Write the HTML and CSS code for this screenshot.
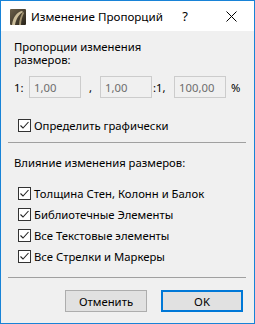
FILE: index.html
```html
<!DOCTYPE html>
<html lang="ru">
<head>
    <meta charset="UTF-8">
    <title>Изменение Пропорций</title>
    <link rel="stylesheet" href="styles.css">
</head>
<body>
<div class="window">
    <div class="titlebar">
        <svg class="app-icon" width="16" height="16" viewBox="0 0 16 16">
            <defs>
                <linearGradient id="ig" x1="0" y1="0" x2="1" y2="1">
                    <stop offset="0" stop-color="#6b604a"/>
                    <stop offset="1" stop-color="#2a241a"/>
                </linearGradient>
            </defs>
            <rect width="16" height="16" rx="1" fill="url(#ig)"/>
            <path d="M2 16 C3 8 7 3 12 2 L13 3 C9 5 6 10 5 16 Z" fill="#cbbd9a"/>
            <path d="M9 16 C9 11 11 6 13 3 L14 4 C12 8 11 12 11 16 Z" fill="#a39472"/>
        </svg>
        <span class="title">Изменение Пропорций</span>
        <span class="caption-btn help">?</span>
        <span class="caption-btn">
            <svg width="11" height="11" viewBox="0 0 11 11">
                <path d="M0.5 0.5 L10.5 10.5 M10.5 0.5 L0.5 10.5" stroke="#000" stroke-width="1"/>
            </svg>
        </span>
    </div>

    <div class="content">
        <div class="label two-lines">
            <div>Пропорции изменения</div>
            <div>размеров:</div>
        </div>

        <div class="ratio-row">
            <span class="sep-text first">1:</span>
            <input class="field" type="text" value="1,00" disabled>
            <span class="sep-text comma">,</span>
            <input class="field" type="text" value="1,00" disabled>
            <span class="sep-text colon">:1,</span>
            <input class="field" type="text" value="100,00" disabled>
            <span class="sep-text pct">%</span>
        </div>

        <div class="check-row graphic">
            <span class="box"><svg width="11" height="11" viewBox="0 0 11 11"><polyline points="1.5,5.5 4,8 9.5,2" fill="none" stroke="#222" stroke-width="1.1"/></svg></span>
            <span>Определить графически</span>
        </div>

        <div class="divider first-divider"></div>

        <div class="label single">Влияние изменения размеров:</div>

        <div class="check-list">
            <div class="check-row">
                <span class="box"><svg width="11" height="11" viewBox="0 0 11 11"><polyline points="1.5,5.5 4,8 9.5,2" fill="none" stroke="#222" stroke-width="1.1"/></svg></span>
                <span>Толщина Стен, Колонн и Балок</span>
            </div>
            <div class="check-row">
                <span class="box"><svg width="11" height="11" viewBox="0 0 11 11"><polyline points="1.5,5.5 4,8 9.5,2" fill="none" stroke="#222" stroke-width="1.1"/></svg></span>
                <span>Библиотечные Элементы</span>
            </div>
            <div class="check-row">
                <span class="box"><svg width="11" height="11" viewBox="0 0 11 11"><polyline points="1.5,5.5 4,8 9.5,2" fill="none" stroke="#222" stroke-width="1.1"/></svg></span>
                <span>Все Текстовые элементы</span>
            </div>
            <div class="check-row">
                <span class="box"><svg width="11" height="11" viewBox="0 0 11 11"><polyline points="1.5,5.5 4,8 9.5,2" fill="none" stroke="#222" stroke-width="1.1"/></svg></span>
                <span>Все Стрелки и Маркеры</span>
            </div>
        </div>

        <div class="divider bottom-divider"></div>

        <div class="buttons">
            <button class="btn">Отменить</button>
            <button class="btn default">OK</button>
        </div>
    </div>
</div>
</body>
</html>
```

FILE: styles.css
```css
* {
    box-sizing: border-box;
}

body {
    margin: 0;
    font-family: "Noto Sans", "Open Sans", sans-serif;
    font-size: 11.3px;
    color: #000;
    background: #f0f0f0;
}

.window {
    width: 255px;
    height: 324px;
    border: 1px solid #1883d7;
    background: #f0f0f0;
    overflow: hidden;
}

.titlebar {
    height: 30px;
    background: #fff;
    display: flex;
    align-items: center;
    padding-left: 9px;
}

.app-icon {
    flex: none;
    margin-top: 1px;
}

.title {
    flex: 1;
    min-width: 0;
    margin-left: 5px;
    font-size: 11.6px;
    white-space: nowrap;
    color: #000;
}

.caption-btn {
    flex: none;
    width: 46px;
    height: 30px;
    display: flex;
    align-items: center;
    justify-content: center;
}

.caption-btn svg {
    display: block;
}

.help {
    font-size: 13px;
}

.content {
    padding: 9px 7px 0 13px;
}

.two-lines {
    height: 26px;
    line-height: 13px;
}

.two-lines div {
    height: 13px;
}

.single {
    margin-top: 10px;
    height: 20px;
    line-height: 20px;
}

.ratio-row {
    display: flex;
    align-items: center;
    margin-top: 10px;
    height: 22px;
}

.field {
    width: 52px;
    height: 22px;
    border: 1px solid #cccccc;
    background: #f0f0f0;
    color: #6d6d6d;
    font-family: inherit;
    font-size: 11.3px;
    padding: 0 0 0 4px;
    margin: 0;
}

.sep-text.first {
    width: 15px;
}

.sep-text.comma {
    width: 19px;
    padding-left: 8px;
}

.sep-text.colon {
    width: 22px;
    padding-left: 1px;
}

.sep-text.pct {
    padding-left: 5px;
}

.check-list {
    margin-top: 10px;
}

.check-row {
    display: flex;
    align-items: center;
    height: 21px;
    padding-left: 4px;
}

.check-row.graphic {
    margin-top: 17px;
    height: 20px;
}

.box {
    width: 13px;
    height: 13px;
    border: 1px solid #333;
    background: #fff;
    display: flex;
    align-items: center;
    justify-content: center;
    margin-right: 3px;
    flex: none;
}

.box svg {
    display: block;
}

.divider {
    height: 1px;
    background: #a0a0a0;
    margin-left: -6px;
    margin-right: 1px;
}

.first-divider {
    margin-top: 7px;
}

.bottom-divider {
    margin-top: 10px;
}

.buttons {
    display: flex;
    justify-content: flex-end;
    gap: 14px;
    margin-top: 12px;
    padding-right: 4px;
}

.btn {
    width: 82px;
    height: 22px;
    border: 1px solid #adadad;
    background: #e1e1e1;
    font-family: inherit;
    font-size: 11.3px;
    color: #000;
    padding: 0;
}

.btn.default {
    border: 2px solid #0078d7;
}
```
